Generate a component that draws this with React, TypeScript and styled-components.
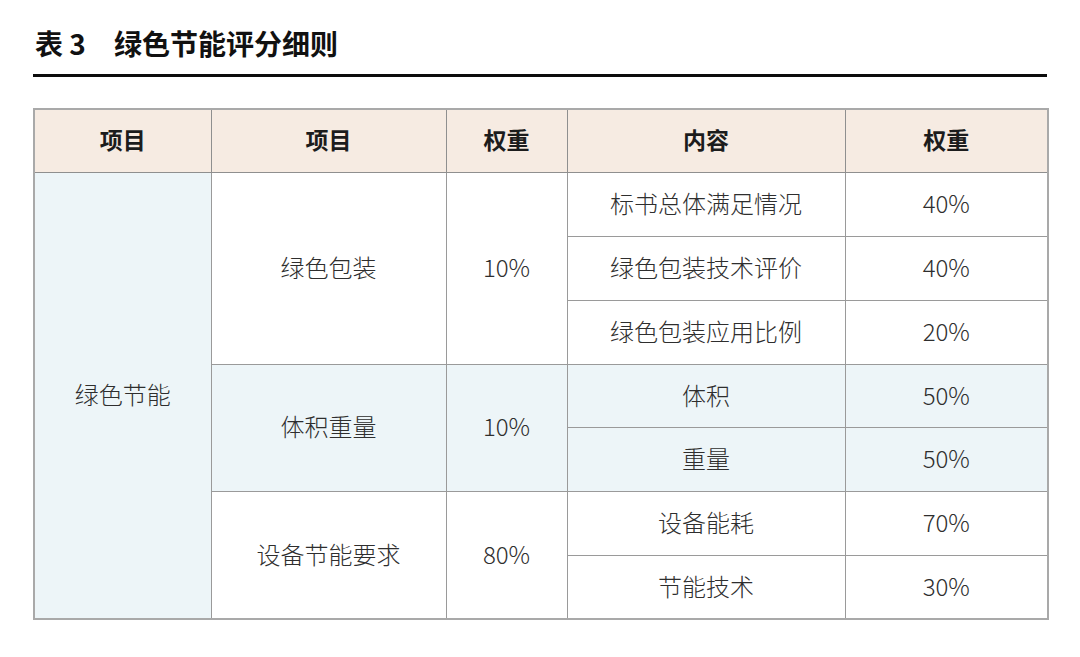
import React from 'react'
import styled, { createGlobalStyle } from 'styled-components'

const GlobalStyle = createGlobalStyle`
  html, body {
    margin: 0;
    padding: 0;
    background: #ffffff;
  }
  body {
    font-family: "Noto Sans CJK SC", "Noto Sans", sans-serif;
    color: #333333;
  }
`

const Page = styled.div`
  width: 1080px;
  padding: 29px 33px 0 33px;
  box-sizing: border-box;
`

const Title = styled.h1`
  margin: 0 0 0 2px;
  font-size: 28px;
  line-height: 28px;
  font-weight: 700;
  color: #111111;
  display: flex;
  gap: 28px;
`

const Rule = styled.div`
  margin-top: 17px;
  height: 3px;
  width: 1014px;
  background: #0c0c0c;
`

const Table = styled.table`
  margin-top: 31px;
  width: 1014px;
  border-collapse: collapse;
  table-layout: fixed;
  border: 2px solid #a9a9a9;
`

const Row = styled.tr`
  height: 63.8px;
`

const HeadCell = styled.th`
  padding: 0 0 4px 0;
  background: #f6ebe2;
  border: 1px solid #8f8f8f;
  font-size: 23px;
  font-weight: 700;
  color: #1c1c1c;
  text-align: center;
  vertical-align: middle;
`

const Cell = styled.td<{ tint?: boolean }>`
  padding: 0 0 4px 0;
  background: ${({ tint }) => (tint ? '#edf5f8' : '#ffffff')};
  border: 1px solid #9a9a9a;
  font-size: 24px;
  font-weight: 300;
  color: #2e2e2e;
  text-align: center;
  vertical-align: middle;
`

const widths = [177, 235, 121, 278, 203]

const groups = [
  {
    name: '绿色包装',
    weight: '10%',
    tint: false,
    items: [
      ['标书总体满足情况', '40%'],
      ['绿色包装技术评价', '40%'],
      ['绿色包装应用比例', '20%']
    ]
  },
  {
    name: '体积重量',
    weight: '10%',
    tint: true,
    items: [
      ['体积', '50%'],
      ['重量', '50%']
    ]
  },
  {
    name: '设备节能要求',
    weight: '80%',
    tint: false,
    items: [
      ['设备能耗', '70%'],
      ['节能技术', '30%']
    ]
  }
]

const totalRows = groups.reduce((n, g) => n + g.items.length, 0)

export default function App() {
  return (
    <>
      <GlobalStyle />
      <Page>
        <Title>
          <span>表 3</span>
          <span>绿色节能评分细则</span>
        </Title>
        <Rule />
        <Table>
          <colgroup>
            {widths.map((w, i) => (
              <col key={i} style={{ width: w }} />
            ))}
          </colgroup>
          <thead>
            <Row>
              <HeadCell>项目</HeadCell>
              <HeadCell>项目</HeadCell>
              <HeadCell>权重</HeadCell>
              <HeadCell>内容</HeadCell>
              <HeadCell>权重</HeadCell>
            </Row>
          </thead>
          <tbody>
            {groups.map((g, gi) =>
              g.items.map((item, ii) => (
                <Row key={`${gi}-${ii}`}>
                  {gi === 0 && ii === 0 && (
                    <Cell tint rowSpan={totalRows}>
                      绿色节能
                    </Cell>
                  )}
                  {ii === 0 && (
                    <>
                      <Cell tint={g.tint} rowSpan={g.items.length}>
                        {g.name}
                      </Cell>
                      <Cell tint={g.tint} rowSpan={g.items.length}>
                        {g.weight}
                      </Cell>
                    </>
                  )}
                  <Cell tint={g.tint}>{item[0]}</Cell>
                  <Cell tint={g.tint}>{item[1]}</Cell>
                </Row>
              ))
            )}
          </tbody>
        </Table>
      </Page>
    </>
  )
}
